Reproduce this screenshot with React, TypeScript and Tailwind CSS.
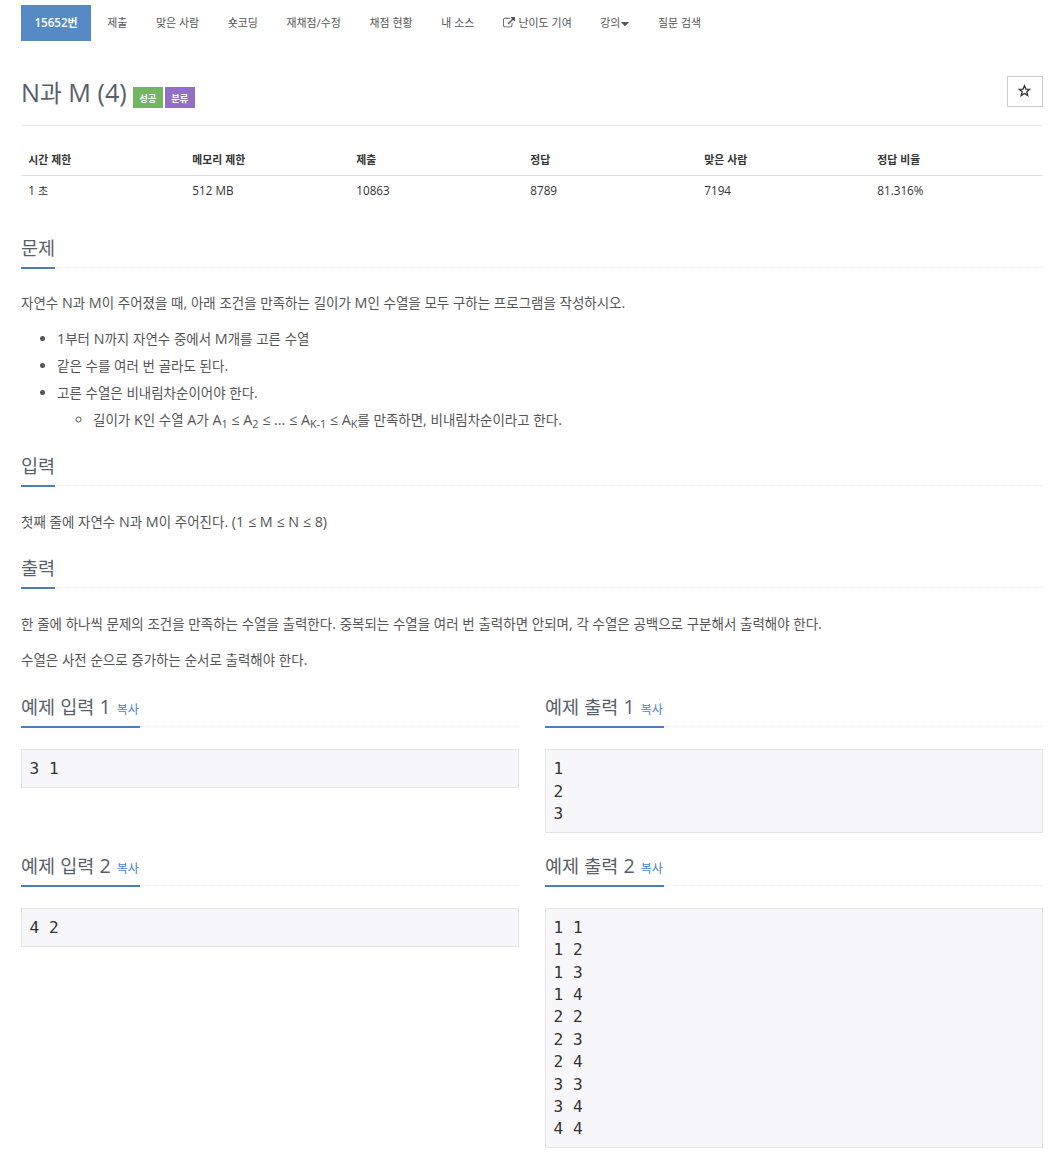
import { Fragment, ReactNode } from 'react'
import { FaCaretDown } from 'react-icons/fa'

// Hangul is set slightly smaller than the Latin text around it
function Ko({ children }: { children: string }) {
  return (
    <>
      {children.split(/([가-힣]+)/).map((part, i) =>
        i % 2 ? (
          <span key={i} className="text-[0.942em] leading-none">{part}</span>
        ) : (
          <Fragment key={i}>{part}</Fragment>
        )
      )}
    </>
  )
}

const menu = ['제출', '맞은 사람', '숏코딩', '재채점/수정', '채점 현황', '내 소스', '난이도 기여', '강의', '질문 검색']

const info = [
  { label: '시간 제한', value: '1 초', width: 'w-[164px]' },
  { label: '메모리 제한', value: '512 MB', width: 'w-[164px]' },
  { label: '제출', value: '10863', width: 'w-[174px]' },
  { label: '정답', value: '8789', width: 'w-[174px]' },
  { label: '맞은 사람', value: '7194', width: 'w-[173px]' },
  { label: '정답 비율', value: '81.316%', width: 'w-[173px]' },
]

const samples = [
  { input: '3 1', output: '1\n2\n3' },
  { input: '4 2', output: '1 1\n1 2\n1 3\n1 4\n2 2\n2 3\n2 4\n3 3\n3 4\n4 4' },
]

function ExternalIcon() {
  return (
    <svg viewBox="0 0 1792 1792" className="mr-[3px] ml-[0.5px] h-[12px] w-[12px]" fill="currentColor">
      <path d="M1408 928v320q0 119-84.500 203.500t-203.500 84.500h-832q-119 0-203.500-84.500t-84.500-203.500v-832q0-119 84.500-203.500t203.500-84.500h704q14 0 23 9t9 23v64q0 14-9 23t-23 9h-704q-66 0-113 47t-47 113v832q0 66 47 113t113 47h832q66 0 113-47t47-113v-320q0-14 9-23t23-9h64q14 0 23 9t9 23zm384-864v512q0 26-19 45t-45 19-45-19l-176-176-652 652q-10 10-23 10t-23-10l-114-114q-10-10-10-23t10-23l652-652-176-176q-19-19-19-45t19-45 45-19h512q26 0 45 19t19 45z" />
    </svg>
  )
}

function StarIcon() {
  return (
    <svg viewBox="0 0 24 24" className="-mt-[2px] mr-[2px] h-[13px] w-[13px]" fill="none" stroke="currentColor" strokeWidth="2.4">
      <path d="M12 3l2.600 6.400 7 .500-5.300 4.500 1.700 6.900-6-3.800-6 3.800 1.700-6.900L2.400 9.900l7-.500z" />
    </svg>
  )
}

function Headline({ title, copy = false }: { title: string; copy?: boolean }) {
  return (
    <div className="flex h-[36px] border-b border-dotted border-[#e4e9f0]">
      <h2 className="h-[37px] border-b-2 border-[#4a7ebf] text-[19.7px] leading-[32px] whitespace-nowrap text-[#585f69]">
        <Ko>{title}</Ko>
        {copy && <span className="ml-[6px] pr-px text-[12.8px] leading-none text-[#4a86c8]"><Ko>복사</Ko></span>}
      </h2>
    </div>
  )
}

function Section({ title, children }: { title: string; children: ReactNode }) {
  return (
    <section>
      <Headline title={title} />
      <div className="pt-[21.8px] pb-[17px] text-[14.3px] leading-[27px] text-[#555]">{children}</div>
    </section>
  )
}

function Sample({ title, data }: { title: string; data: string }) {
  return (
    <div>
      <Headline title={title} copy />
      <pre className="mt-[22px] border border-[#e3e4e6] bg-[#f7f7f9] px-[7.5px] pt-[8px] pb-[6.400px] font-['DejaVu_Sans_Mono',monospace] text-[16.1px] leading-[22.4px] text-[#333]">
        {data}
      </pre>
    </div>
  )
}

export default function App() {
  return (
    <div className="min-h-[1162px] w-[1056px] bg-white pt-[5px] pr-[13px] pl-[21px] font-['Open_Sans','Noto_Sans_CJK_KR',sans-serif] text-[#333]">
      <nav className="flex h-[36px] items-center text-[11.6px] whitespace-nowrap text-[#555]">
        <div className="mr-[2px] flex h-[36px] w-[70px] items-center justify-center bg-[#568ac5] font-semibold text-white">
          <span><Ko>15652번</Ko></span>
        </div>
        {menu.map((item) => (
          <div key={item} className="flex items-center px-[14.3px]">
            {item === '난이도 기여' && <ExternalIcon />}
            <span><Ko>{item}</Ko></span>
            {item === '강의' && <FaCaretDown className="mt-px ml-px h-[13px] w-[8px]" />}
          </div>
        ))}
      </nav>

      <header className="mt-[35px] flex h-[50px] items-start justify-between border-b border-[#eee]">
        <div className="flex">
          <h1 className="text-[25.2px] leading-[32px] text-[#585f69]"><Ko>N과 M (4)</Ko></h1>
          <div className="mt-[11px] ml-[6px] flex gap-[2px] text-[10px] leading-[22px] font-bold text-white">
            <span className="h-[21px] w-[30px] bg-[#72b561] text-center"><Ko>성공</Ko></span>
            <span className="h-[21px] w-[30px] bg-[#936ec7] text-center"><Ko>분류</Ko></span>
          </div>
        </div>
        <button className="flex h-[31px] w-[36px] items-center justify-center border border-[#ccc] text-[#333]">
          <StarIcon />
        </button>
      </header>

      <table className="mt-[17px] w-full table-fixed text-left text-[11.7px] leading-[18px]">
        <thead>
          <tr className="h-[32px] border-b border-[#ddd] text-[11.5px]">
            {info.map((col) => (
              <th key={col.label} className={`pt-[2px] pl-[7.3px] font-bold ${col.width}`}><Ko>{col.label}</Ko></th>
            ))}
          </tr>
        </thead>
        <tbody>
          <tr className="h-[31px]">
            {info.map((col) => (
              <td key={col.label} className="pb-[2px] pl-[7.3px]"><Ko>{col.value}</Ko></td>
            ))}
          </tr>
        </tbody>
      </table>

      <div className="mt-[25.6px] pb-[1.2px]">
        <Section title="문제">
          <p><Ko>자연수 N과 M이 주어졌을 때, 아래 조건을 만족하는 길이가 M인 수열을 모두 구하는 프로그램을 작성하시오.</Ko></p>
          <ul className="mt-[9px] list-disc pl-[36px]">
            <li><Ko>1부터 N까지 자연수 중에서 M개를 고른 수열</Ko></li>
            <li><Ko>같은 수를 여러 번 골라도 된다.</Ko></li>
            <li>
              <Ko>고른 수열은 비내림차순이어야 한다.</Ko>
              <ul className="list-[circle] pl-[36px]">
                <li>
                  <Ko>길이가 K인 수열 A가 A</Ko><sub>1</sub> ≤ A<sub>2</sub> ≤ ... ≤ A<sub>K-1</sub> ≤ A<sub>K</sub>
                  <Ko>를 만족하면, 비내림차순이라고 한다.</Ko>
                </li>
              </ul>
            </li>
          </ul>
        </Section>
        <Section title="입력">
          <p><Ko>{'첫째 줄에 자연수 N과 M이 주어진다. (1 ≤ M ≤ N ≤ 8)'}</Ko></p>
        </Section>
        <Section title="출력">
          <p><Ko>한 줄에 하나씩 문제의 조건을 만족하는 수열을 출력한다. 중복되는 수열을 여러 번 출력하면 안되며, 각 수열은 공백으로 구분해서 출력해야 한다.</Ko></p>
          <p className="mt-[9px]"><Ko>수열은 사전 순으로 증가하는 순서로 출력해야 한다.</Ko></p>
        </Section>
      </div>

      {samples.map((sample, i) => (
        <div key={i} className="mb-[17px] grid grid-cols-2 items-start gap-[26px]">
          <Sample title={`예제 입력 ${i + 1}`} data={sample.input} />
          <Sample title={`예제 출력 ${i + 1}`} data={sample.output} />
        </div>
      ))}
    </div>
  )
}
